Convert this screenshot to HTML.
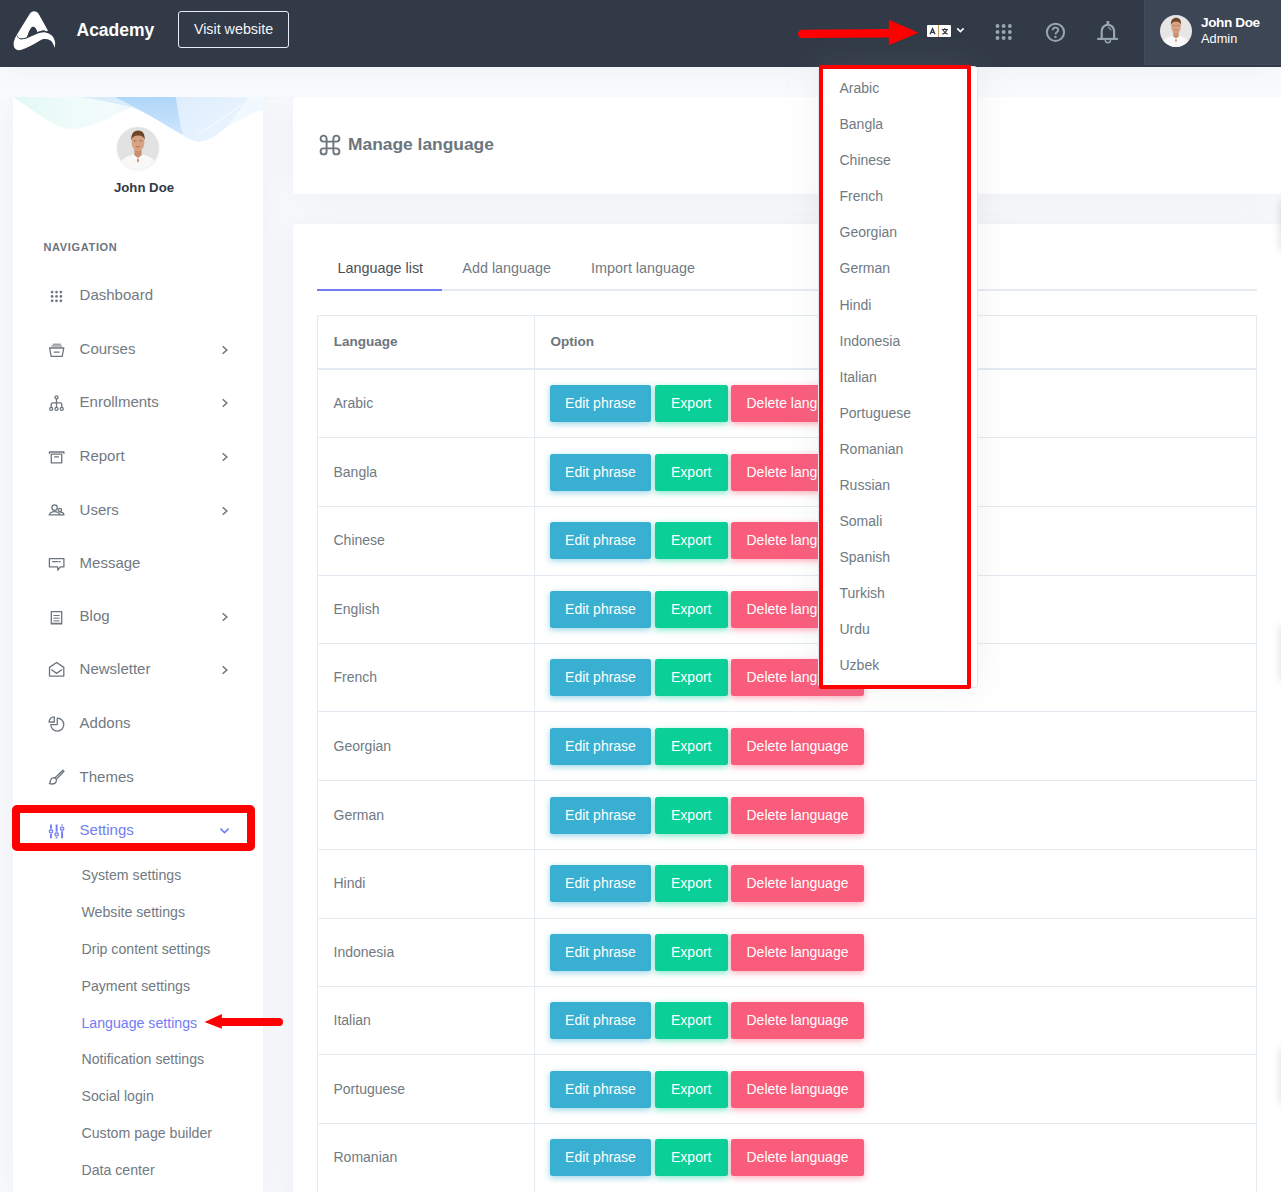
<!DOCTYPE html>
<html lang="en">
<head>
<meta charset="utf-8">
<title>Manage language | Academy</title>
<style>
*{box-sizing:border-box;margin:0;padding:0}
html,body{width:1281px;height:1192px;overflow:hidden}
body{font-family:"Liberation Sans",sans-serif;background:#fafbfe;color:#6c757d;position:relative;font-size:14px;line-height:18px}
.abs{position:absolute}
svg{display:block;overflow:visible}
#topbar{position:absolute;left:0;top:0;width:1281px;height:67px;background:#313a46;box-shadow:0 0 35px 0 rgba(154,161,171,.15)}
#brand{position:absolute;left:76.5px;top:18.5px;font-size:17.5px;font-weight:700;color:#fff;line-height:22px;white-space:nowrap}
#visit{position:absolute;left:178px;top:11px;width:111px;height:37px;border:1px solid #e9ecf2;border-radius:3px;color:#f4f5fa;font-size:14.3px;line-height:34.4px;text-align:center;white-space:nowrap}
#userbox{position:absolute;left:1144px;top:0;width:137px;height:65px;background:#3c4655;border-left:1px solid #414d5d;border-bottom:1px solid #414d5d}
#uname{position:absolute;left:1201px;top:14px;font-size:13.6px;font-weight:700;color:#fff;line-height:18px;white-space:nowrap;letter-spacing:-.4px}
#urole{position:absolute;left:1201px;top:31px;font-size:12.8px;color:#fff;line-height:16px;white-space:nowrap}
#sidebar{position:absolute;left:13px;top:97px;width:250px;height:1100px;background:#fff;overflow:hidden}
#sideshadow{position:absolute;left:13px;top:97px;width:250px;height:1100px;box-shadow:0 0 35px 0 rgba(154,161,171,.15);clip-path:inset(0 -40px -40px -40px)}
#sname{position:absolute;left:0;top:82px;width:262px;text-align:center;font-size:13.2px;font-weight:700;color:#313a46;line-height:18px;white-space:nowrap}
#navt{position:absolute;left:30.5px;top:143px;font-size:11px;font-weight:700;letter-spacing:.65px;color:#6c757d;line-height:14px;white-space:nowrap}
.ni{position:absolute;left:66.6px;font-size:15px;color:#717a82;line-height:20px;white-space:nowrap}
.ni.act{color:#727cf5}
.sub{position:absolute;left:68.5px;font-size:14.15px;color:#717a82;line-height:18px;white-space:nowrap}
.sub.act{color:#727cf5}
.card{position:absolute;background:#fff;box-shadow:0 0 35px 0 rgba(154,161,171,.15);border-radius:4px;clip-path:inset(-40px -40px -40px -30px)}
#ptitle{position:absolute;left:55px;top:35px;font-size:17.4px;font-weight:700;color:#6c757d;line-height:24px;white-space:nowrap}
.tab{position:absolute;font-size:14.4px;line-height:18px;color:#717a82;white-space:nowrap}
.tab.act{color:#495057}
#tbl{position:absolute;width:940px;border:1px solid #e3eaf1;height:900px}
.hl{position:absolute;left:0;width:938px;height:1px;background:#e3eaf1}
.th{position:absolute;font-size:13.5px;font-weight:700;color:#6c757d;line-height:18px;white-space:nowrap}
.lang{position:absolute;left:15.5px;font-size:14px;color:#717a82;line-height:18px;white-space:nowrap}
.btn{position:absolute;height:37px;border-radius:2.5px;color:#fff;font-size:14px;line-height:37px;text-align:center;white-space:nowrap}
.b1{left:232px;width:101px;background:#39afd1;box-shadow:0 2px 6px 0 rgba(57,175,209,.5)}
.b2{left:337px;width:72.5px;background:#0acf97;box-shadow:0 2px 6px 0 rgba(10,207,151,.5)}
.b3{left:413px;width:133px;background:#fa5c7c;box-shadow:0 2px 6px 0 rgba(250,92,124,.5)}
#dd{position:absolute;left:818px;top:66px;width:159.5px;height:622px;background:#fff;border:1px solid #e2e7ee;border-radius:4px;box-shadow:0 0 35px 0 rgba(154,161,171,.15)}
.di{position:absolute;left:20.5px;font-size:14px;color:#717a82;line-height:18px;white-space:nowrap}
</style>
</head>
<body>
<div id="topbar">
<svg class="abs" style="left:0;top:0" width="70" height="60" viewBox="0 0 70 60">
<path d="M16.7 35 C17.4 37 18.4 38.2 19.6 38.9 C22 39.4 25 39.2 27.3 38 L37.8 33.4 C39.5 32.8 41 32.4 42.5 32.4 C44.2 32.2 45.8 32.4 47.2 32.9 C49 33.4 50.6 34.4 51.8 35.6 C53 36.6 53.8 37.8 54.2 39.2 C55 41 55.3 43 55.1 44.8 C55.1 46 54.9 47 54.6 47.8 C54.2 46 53.6 44.6 52.8 43.2 C52 41.8 50.8 40.8 49.5 40.1 C48.4 39.4 47 39 45.7 39 C44.4 38.9 43.2 39 42 39.4 C40 40.2 37.6 41.8 35.4 43.2 C33 44.6 30.6 45.8 28.2 46.9 C26.4 47.8 24.6 48.6 22.8 49.3 C21.4 49.8 20 50.2 18.6 50.2 C17.2 50.2 16 49.6 15.3 48.8 C14.2 47.8 13.7 46.4 13.7 45 C13.5 43.6 13.6 42.2 14.1 40.8 C14.6 38.8 15.6 36.8 16.7 35 Z" fill="#fff"/>
<path d="M34 11.3 C36 11.3 37.6 12.2 38.7 13.9 L47.9 30.5 C47.3 31.3 46.6 31.6 46.2 31.5 C45 30.6 44 30.4 43.4 30.5 C42 30.6 40.8 31 39.7 31.5 L37.3 32.2 C36.5 29.5 35 27 33.1 26.8 C31 27.2 29.6 30 27 37.3 C25 38.4 22 38.9 19 38.3 C18 37.6 17.2 36.4 16.7 35 L29.8 13.7 C30.8 12.2 32.2 11.3 34 11.3 Z" fill="#fff"/>
<path d="M27 37.5 C29.4 30.2 31 27.2 33.1 26.8 C35 27 36.5 29.5 37.3 32.4 Z" fill="#313a46"/>
<path d="M17 35.4 C17.6 37.2 18.6 38.2 19.4 38.5 C22 39 25 38.8 27 37.5 L37.3 32.4 C39 31.9 41.5 31 43.4 30.95 C44.6 30.9 45.6 31.4 46.4 31.95 C47 31.95 47.6 31.4 48 30.8" fill="none" stroke="#313a46" stroke-width="0.75"/>
</svg>

<div id="brand">Academy</div>
<div id="visit">Visit website</div>
<div class="abs" style="left:927.2px;top:25px;width:23.6px;height:12px;background:#fff;border-radius:1px"></div>
<div class="abs" style="left:938.1px;top:25px;width:.9px;height:12px;background:#c9985f"></div>
<svg class="abs" style="left:927px;top:25px" width="24" height="12" viewBox="0 0 24 12"><path d="M3.1 9.2 L5.55 3.7 L8 9.2 M4.1 7.4 H7" fill="none" stroke="#313a46" stroke-width="1.35"/><path d="M14.8 4.5 H21 M17.9 2.9 V4.5 M20 4.5 C19.4 6.6 17.4 8.4 15.3 9.3 M15.9 4.8 C16.8 6.8 18.4 8.4 20.7 9.3" fill="none" stroke="#313a46" stroke-width="1.05"/></svg>
<svg class="abs" style="left:956px;top:27px" width="10" height="7" viewBox="0 0 10 7"><path d="M1.2 1.4 L4.4 4.6 L7.6 1.4" fill="none" stroke="#fff" stroke-width="1.6"/></svg>
<svg class="abs" style="left:995px;top:24px" width="18" height="17" viewBox="0 0 18 17" fill="#98a6ad"><circle cx="2.5" cy="2.05" r="1.95"/><circle cx="8.65" cy="2.05" r="1.95"/><circle cx="14.85" cy="2.05" r="1.95"/><circle cx="2.5" cy="8.0" r="1.95"/><circle cx="8.65" cy="8.0" r="1.95"/><circle cx="14.85" cy="8.0" r="1.95"/><circle cx="2.5" cy="14.0" r="1.95"/><circle cx="8.65" cy="14.0" r="1.95"/><circle cx="14.85" cy="14.0" r="1.95"/></svg>
<svg class="abs" style="left:1045px;top:22px" width="21" height="21" viewBox="0 0 21 21"><circle cx="10.5" cy="10.3" r="8.6" fill="none" stroke="#98a6ad" stroke-width="2"/><path d="M7.6 8.2 C7.6 4.6 13.4 4.8 13.2 8.2 C13.1 10 10.6 10.2 10.5 12.4" fill="none" stroke="#98a6ad" stroke-width="1.9"/><circle cx="10.5" cy="15" r="1.2" fill="#98a6ad"/></svg>
<svg class="abs" style="left:1097px;top:20px" width="22" height="24" viewBox="0 0 22 24"><path d="M4.7 18 V11 A6.2 6.2 0 0 1 17.1 11 V18" fill="none" stroke="#98a6ad" stroke-width="2.2"/><path d="M0.2 18.9 H21" stroke="#98a6ad" stroke-width="2.1" fill="none"/><rect x="9.5" y="1" width="2.8" height="3.4" fill="#98a6ad"/><path d="M8.3 20.1 A2.6 2.6 0 0 0 13.5 20.1" fill="none" stroke="#98a6ad" stroke-width="1.5"/><path d="M10.8 7.2 C12.6 7.8 13.8 8.8 14.2 10.4" fill="none" stroke="#98a6ad" stroke-width="1.1"/></svg>
<div class="abs" style="left:1160px;top:15px;width:32px;height:32px;border-radius:50%;background:#e6e6e6;overflow:hidden;z-index:3">
<svg width="32" height="32" viewBox="0 0 42 42"><path d="M1 42 C2 33 9 29.4 16 27.6 L21 31 L26 27.6 C33 29.4 40 33 41 42 Z" fill="#f8f8f8"/><path d="M17.4 22 H24.6 V28 L21 36 L17.4 28 Z" fill="#c98f70"/><ellipse cx="21" cy="15.4" rx="6.4" ry="8.8" fill="#d8a283"/><path d="M14.4 13.6 C13.6 6.4 17.4 3.6 21.2 3.6 C25.2 3.6 28.4 6.4 27.6 13.6 C27 10.2 25 8.6 21 8.6 C17.2 8.6 15.2 10.2 14.4 13.6 Z" fill="#6f4527"/><path d="M16 27.6 L19.2 34 L21 31 Z M26 27.6 L22.8 34 L21 31 Z" fill="#fff"/><path d="M16.6 13.8 H19.6 M22.4 13.8 H25.4" stroke="#8a5a3c" stroke-width=".8"/><path d="M19 19.4 Q21 20.6 23 19.4" stroke="#a8664a" stroke-width=".8" fill="none"/></svg>
</div>

<div id="userbox"></div>
<div id="uname">John Doe</div>
<div id="urole">Admin</div>
</div>
<div id="sideshadow"></div>
<div id="sidebar">
<svg class="abs" style="left:0;top:0" width="250" height="60" viewBox="0 0 250 60">
<defs>
<linearGradient id="g1" x1="0" y1="0" x2="1" y2="0"><stop offset="0" stop-color="#e0f8f3"/><stop offset=".18" stop-color="#edfbf8"/><stop offset=".4" stop-color="#f3fbfd"/><stop offset=".5" stop-color="#eaf4fe"/><stop offset="1" stop-color="#f0f8fe"/></linearGradient>
<linearGradient id="g2" x1="0" y1="0" x2="0" y2="1"><stop offset="0" stop-color="#abd4f8"/><stop offset="1" stop-color="#d2e8fc"/></linearGradient>
<linearGradient id="g3" x1="0" y1="0" x2="1" y2="1"><stop offset="0" stop-color="#dcecfd"/><stop offset="1" stop-color="#eef6fe"/></linearGradient>
</defs>
<path d="M0 0 C14 9 28 20 40.5 26.7 C48 30.6 55 32.6 61.6 32 C72 31 83 27 93 22.5 C102 18.4 110 13.4 118.5 10 C126 13 133 16.4 140 20.4 C147 24.4 154 28.8 160.6 32.7 C168 37 176 42 184 44.6 C191 45 197 42.4 203 38.3 C210 33.2 217 27 224 20.4 C231 13.4 237 7 243 2.1 C245 0.8 248 0 250 0 Z" fill="url(#g1)"/>
<path d="M66 0 H102 C115 7 128 13.4 140 20.4 C133 16.4 126 13 118.5 10 C100 6 82 2 66 0 Z" fill="#d6eafc" opacity=".9"/>
<path d="M102 0 H163 C165 14 167 27 170.5 38.6 C175 41.4 179.6 43.4 184 44.6 C176 42 168 37 160.6 32.7 C154 28.8 147 24.4 140 20.4 C128 13.4 115 7 102 0 Z" fill="url(#g2)" opacity=".95"/>
<path d="M163 0 H205 C218 0 232 0.8 243 2.1 C237 7 231 13.4 224 20.4 C217 27 210 33.2 203 38.3 C197 42.4 191 45 184 44.6 C179.6 43.4 175 41.4 170.5 38.6 C167 27 165 14 163 0 Z" fill="url(#g3)" opacity=".9"/>
<path d="M214 30 C228 22 240 16 250 13 V0 H236 Z" fill="#f1f9fe"/>
<path d="M186 36 C200 28 212 20 228 8" stroke="#fff" stroke-width="1" fill="none" opacity=".8"/>
</svg>
<div class="abs" style="left:104px;top:30px;width:42px;height:42px;border-radius:50%;background:#e2e2e2;overflow:hidden;box-shadow:0 1px 3px rgba(0,0,0,.08)">
<svg width="42" height="42" viewBox="0 0 42 42"><path d="M1 42 C2 33 9 29.4 16 27.6 L21 31 L26 27.6 C33 29.4 40 33 41 42 Z" fill="#f8f8f8"/><path d="M17.4 22 H24.6 V28 L21 36 L17.4 28 Z" fill="#c98f70"/><ellipse cx="21" cy="15.4" rx="6.4" ry="8.8" fill="#d8a283"/><path d="M14.4 13.6 C13.6 6.4 17.4 3.6 21.2 3.6 C25.2 3.6 28.4 6.4 27.6 13.6 C27 10.2 25 8.6 21 8.6 C17.2 8.6 15.2 10.2 14.4 13.6 Z" fill="#6f4527"/><path d="M16 27.6 L19.2 34 L21 31 Z M26 27.6 L22.8 34 L21 31 Z" fill="#fff"/><path d="M16.6 13.8 H19.6 M22.4 13.8 H25.4" stroke="#8a5a3c" stroke-width=".8"/><path d="M19 19.4 Q21 20.6 23 19.4" stroke="#a8664a" stroke-width=".8" fill="none"/></svg>
</div>

<div id="sname">John Doe</div>
<div id="navt">NAVIGATION</div>
<div class="ni" style="top:188px">Dashboard</div>
<div class="ni" style="top:242px">Courses</div>
<svg class="abs" style="left:208px;top:247.9px" width="8" height="10" viewBox="0 0 8 10"><path d="M1.7 1.2 L5.8 5 L1.7 8.8" fill="none" stroke="#6c757d" stroke-width="1.5"/></svg>
<div class="ni" style="top:295px">Enrollments</div>
<svg class="abs" style="left:208px;top:300.9px" width="8" height="10" viewBox="0 0 8 10"><path d="M1.7 1.2 L5.8 5 L1.7 8.8" fill="none" stroke="#6c757d" stroke-width="1.5"/></svg>
<div class="ni" style="top:349px">Report</div>
<svg class="abs" style="left:208px;top:354.9px" width="8" height="10" viewBox="0 0 8 10"><path d="M1.7 1.2 L5.8 5 L1.7 8.8" fill="none" stroke="#6c757d" stroke-width="1.5"/></svg>
<div class="ni" style="top:403px">Users</div>
<svg class="abs" style="left:208px;top:408.9px" width="8" height="10" viewBox="0 0 8 10"><path d="M1.7 1.2 L5.8 5 L1.7 8.8" fill="none" stroke="#6c757d" stroke-width="1.5"/></svg>
<div class="ni" style="top:456px">Message</div>
<div class="ni" style="top:509px">Blog</div>
<svg class="abs" style="left:208px;top:514.9px" width="8" height="10" viewBox="0 0 8 10"><path d="M1.7 1.2 L5.8 5 L1.7 8.8" fill="none" stroke="#6c757d" stroke-width="1.5"/></svg>
<div class="ni" style="top:562px">Newsletter</div>
<svg class="abs" style="left:208px;top:567.9px" width="8" height="10" viewBox="0 0 8 10"><path d="M1.7 1.2 L5.8 5 L1.7 8.8" fill="none" stroke="#6c757d" stroke-width="1.5"/></svg>
<div class="ni" style="top:616px">Addons</div>
<div class="ni" style="top:670px">Themes</div>
<div class="ni act" style="top:723px">Settings</div>
<svg class="abs" style="left:206.3px;top:729.6px" width="11" height="8" viewBox="0 0 11 8"><path d="M1.4 1.6 L5.5 5.6 L9.6 1.6" fill="none" stroke="#727cf5" stroke-width="1.5"/></svg>
<svg class="abs" style="left:0;top:0" width="250" height="1095" viewBox="13 97 250 1095" fill="none" stroke="#6c757d" stroke-width="1.3" stroke-linecap="round" stroke-linejoin="round">
<!-- dashboard -->
<g fill="#6c757d" stroke="none"><circle cx="52.1" cy="292.1" r="1.35"/><circle cx="56.5" cy="292.1" r="1.35"/><circle cx="60.9" cy="292.1" r="1.35"/><circle cx="52.1" cy="296.45" r="1.35"/><circle cx="56.5" cy="296.45" r="1.35"/><circle cx="60.9" cy="296.45" r="1.35"/><circle cx="52.1" cy="300.8" r="1.35"/><circle cx="56.5" cy="300.8" r="1.35"/><circle cx="60.9" cy="300.8" r="1.35"/></g>
<!-- courses -->
<path d="M53 344.2 H60.4 M51.8 346 H61.6" stroke-width="1"/><path d="M49.6 348 H63.8 L62.2 356.4 H51.2 Z M54.2 352.1 H59.2"/>
<!-- enrollments -->
<circle cx="56.5" cy="397.4" r="1.5"/><path d="M56.5 399 V407.2 M51.2 407.2 V404.4 Q51.2 402.8 52.8 402.8 H60.2 Q61.8 402.8 61.8 404.4 V407.2"/><circle cx="51.2" cy="408.9" r="1.5"/><circle cx="56.5" cy="408.9" r="1.5"/><circle cx="61.8" cy="408.9" r="1.5"/>
<!-- report -->
<path d="M49.4 453.4 V452 H63.9 V453.4 M51.3 454.2 H61.7 V462.9 H51.3 Z M54.6 456.9 H58.5"/>
<!-- users -->
<circle cx="54.6" cy="507.6" r="2.7"/><path d="M49.2 514.9 C50.8 510.6 58.4 510.6 60 514.9 Z"/><circle cx="60" cy="509.9" r="1.6"/><path d="M60.4 512.2 C62.2 512.2 63.6 513.2 64 514.9 H60.6"/>
<!-- message -->
<path d="M49.4 558.7 H63.9 V566.9 H60.4 L57.8 570.2 V566.9 H49.4 Z M52.6 561.6 H57.6 M59 561.6 H60.2"/>
<!-- blog -->
<path d="M51.3 611.7 H61.7 V623.9 H51.3 Z M51.3 623.4 H61.7"/><path d="M53.8 615.5 H59.2 M53.8 618.2 H59.2 M53.8 620.9 H59.2" stroke-width="1"/>
<!-- newsletter -->
<path d="M49.5 667.4 L56.6 662.5 L63.8 667.4 V676.1 H49.5 Z M51.6 669.8 L56.6 673.4 L61.7 669.8"/>
<!-- addons -->
<path d="M57.3 718.1 A6.5 6.5 0 1 1 50.8 724.6 H57.3 Z M54.3 716.8 V722 H49.1 A5.2 5.2 0 0 1 54.3 716.8 Z"/>
<!-- themes -->
<path d="M62.9 770.2 L64 771.3 L56.3 779.4 L54.9 778 Z M54.9 778 C53.2 777.4 51.4 778 50.8 779.8 C50.4 781.2 50.2 782.6 49.4 783.6 C52.4 784.4 55.4 783.6 56.2 781.6 C56.6 780.6 56.6 780 56.3 779.4"/>
<!-- settings -->
<g stroke="#727cf5"><path d="M51 824.6 V828.8 M51 834 V838.2 M56.6 824.6 V831.8 M56.6 837.2 V838.4 M62.1 824.4 V825.4 M62.1 831.2 V838.2" stroke-width="1.9" stroke-linecap="butt"/><rect x="49.4" y="830" width="3.2" height="2.8" rx="1"/><rect x="55" y="833" width="3.2" height="2.8" rx="1"/><rect x="60.5" y="827.2" width="3.2" height="2.8" rx="1"/></g>
</svg>
<div class="sub" style="top:769px">System settings</div>
<div class="sub" style="top:806px">Website settings</div>
<div class="sub" style="top:843px">Drip content settings</div>
<div class="sub" style="top:880px">Payment settings</div>
<div class="sub act" style="top:917px">Language settings</div>
<div class="sub" style="top:953px">Notification settings</div>
<div class="sub" style="top:990px">Social login</div>
<div class="sub" style="top:1027px">Custom page builder</div>
<div class="sub" style="top:1064px">Data center</div>
</div>
<div class="card" style="left:293px;top:97px;width:988px;height:97px;clip-path:inset(0 -40px -40px -30px)">
<svg class="abs" style="left:26px;top:37px" width="22" height="22" viewBox="0 0 22 22"><path d="M7.6 7.6 H14.4 V14.4 H7.6 Z M7.6 7.6 V4.6 A3 3 0 1 0 4.6 7.6 Z M14.4 7.6 H17.4 A3 3 0 1 0 14.4 4.6 Z M14.4 14.4 V17.4 A3 3 0 1 0 17.4 14.4 Z M7.6 14.4 H4.6 A3 3 0 1 0 7.6 17.4 Z" fill="none" stroke="#6c757d" stroke-width="1.9" stroke-linejoin="round"/></svg>
<div id="ptitle">Manage language</div>
</div>
<div class="card" style="left:293px;top:224px;width:988px;height:1000px">
<div class="tab act" style="left:44.5px;top:35px">Language list</div>
<div class="tab" style="left:169.3px;top:35px">Add language</div>
<div class="tab" style="left:298.1px;top:35px">Import language</div>
<div class="abs" style="left:24px;top:65px;width:940px;height:2px;background:#e6ebf1"></div>
<div class="abs" style="left:24px;top:65px;width:125px;height:2px;background:#727cf5"></div>
<div id="tbl" style="left:24px;top:91px">
<div class="abs" style="left:216px;top:0;width:1px;height:900px;background:#e3eaf1"></div>
<div class="th" style="left:15.800000000000011px;top:17px">Language</div>
<div class="th" style="left:232.60000000000002px;top:17px">Option</div>
<div class="hl" style="top:52px;height:2px"></div>
<div class="lang" style="top:78px">Arabic</div>
<div class="btn b1" style="top:69px">Edit phrase</div><div class="btn b2" style="top:69px">Export</div><div class="btn b3" style="top:69px">Delete language</div>
<div class="lang" style="top:147px">Bangla</div>
<div class="btn b1" style="top:138px">Edit phrase</div><div class="btn b2" style="top:138px">Export</div><div class="btn b3" style="top:138px">Delete language</div>
<div class="hl" style="top:121px"></div>
<div class="lang" style="top:215px">Chinese</div>
<div class="btn b1" style="top:206px">Edit phrase</div><div class="btn b2" style="top:206px">Export</div><div class="btn b3" style="top:206px">Delete language</div>
<div class="hl" style="top:190px"></div>
<div class="lang" style="top:284px">English</div>
<div class="btn b1" style="top:275px">Edit phrase</div><div class="btn b2" style="top:275px">Export</div><div class="btn b3" style="top:275px">Delete language</div>
<div class="hl" style="top:259px"></div>
<div class="lang" style="top:352px">French</div>
<div class="btn b1" style="top:343px">Edit phrase</div><div class="btn b2" style="top:343px">Export</div><div class="btn b3" style="top:343px">Delete language</div>
<div class="hl" style="top:327px"></div>
<div class="lang" style="top:421px">Georgian</div>
<div class="btn b1" style="top:412px">Edit phrase</div><div class="btn b2" style="top:412px">Export</div><div class="btn b3" style="top:412px">Delete language</div>
<div class="hl" style="top:395px"></div>
<div class="lang" style="top:490px">German</div>
<div class="btn b1" style="top:481px">Edit phrase</div><div class="btn b2" style="top:481px">Export</div><div class="btn b3" style="top:481px">Delete language</div>
<div class="hl" style="top:464px"></div>
<div class="lang" style="top:558px">Hindi</div>
<div class="btn b1" style="top:549px">Edit phrase</div><div class="btn b2" style="top:549px">Export</div><div class="btn b3" style="top:549px">Delete language</div>
<div class="hl" style="top:533px"></div>
<div class="lang" style="top:627px">Indonesia</div>
<div class="btn b1" style="top:618px">Edit phrase</div><div class="btn b2" style="top:618px">Export</div><div class="btn b3" style="top:618px">Delete language</div>
<div class="hl" style="top:602px"></div>
<div class="lang" style="top:695px">Italian</div>
<div class="btn b1" style="top:686px">Edit phrase</div><div class="btn b2" style="top:686px">Export</div><div class="btn b3" style="top:686px">Delete language</div>
<div class="hl" style="top:670px"></div>
<div class="lang" style="top:764px">Portuguese</div>
<div class="btn b1" style="top:755px">Edit phrase</div><div class="btn b2" style="top:755px">Export</div><div class="btn b3" style="top:755px">Delete language</div>
<div class="hl" style="top:738px"></div>
<div class="lang" style="top:832px">Romanian</div>
<div class="btn b1" style="top:823px">Edit phrase</div><div class="btn b2" style="top:823px">Export</div><div class="btn b3" style="top:823px">Delete language</div>
<div class="hl" style="top:807px"></div>
<div class="lang" style="top:901px">Russian</div>
<div class="btn b1" style="top:892px">Edit phrase</div><div class="btn b2" style="top:892px">Export</div><div class="btn b3" style="top:892px">Delete language</div>
<div class="hl" style="top:876px"></div>
</div>
</div>
<div id="dd">
<div class="di" style="top:12px">Arabic</div>
<div class="di" style="top:48px">Bangla</div>
<div class="di" style="top:84px">Chinese</div>
<div class="di" style="top:120px">French</div>
<div class="di" style="top:156px">Georgian</div>
<div class="di" style="top:192px">German</div>
<div class="di" style="top:229px">Hindi</div>
<div class="di" style="top:265px">Indonesia</div>
<div class="di" style="top:301px">Italian</div>
<div class="di" style="top:337px">Portuguese</div>
<div class="di" style="top:373px">Romanian</div>
<div class="di" style="top:409px">Russian</div>
<div class="di" style="top:445px">Somali</div>
<div class="di" style="top:481px">Spanish</div>
<div class="di" style="top:517px">Turkish</div>
<div class="di" style="top:553px">Urdu</div>
<div class="di" style="top:589px">Uzbek</div>
</div>
<!-- red annotations -->
<div class="abs" style="left:819px;top:65px;width:152px;height:624px;border:4px solid #ff0000;border-radius:2px"></div>
<svg class="abs" style="left:790px;top:15px" width="135" height="36" viewBox="0 0 135 36"><path d="M12.2 18.9 L100 18.2" stroke="#ff0000" stroke-width="8.4" stroke-linecap="round" fill="none"/><path d="M98.8 4.8 L128.6 17.8 L98.8 30.3 Z" fill="#ff0000"/></svg>
<div class="abs" style="left:12px;top:805px;width:243px;height:46px;border:8px solid #ff0000;border-radius:5px"></div>
<svg class="abs" style="left:200px;top:1008px" width="90" height="28" viewBox="0 0 90 28"><path d="M21 14 H79" stroke="#ff0000" stroke-width="8" stroke-linecap="round" fill="none"/><path d="M21.9 6 L4.5 14 L21.9 20.7 Z" fill="#ff0000"/></svg>
<div class="abs" style="left:1283px;top:201px;width:20px;height:48px;box-shadow:0 0 10px 2px rgba(0,0,0,.16)"></div>
<div class="abs" style="left:1283px;top:628px;width:20px;height:50px;box-shadow:0 0 10px 2px rgba(0,0,0,.16)"></div>
<div class="abs" style="left:1283px;top:1051px;width:20px;height:50px;box-shadow:0 0 10px 2px rgba(0,0,0,.16)"></div>

</body>
</html>
